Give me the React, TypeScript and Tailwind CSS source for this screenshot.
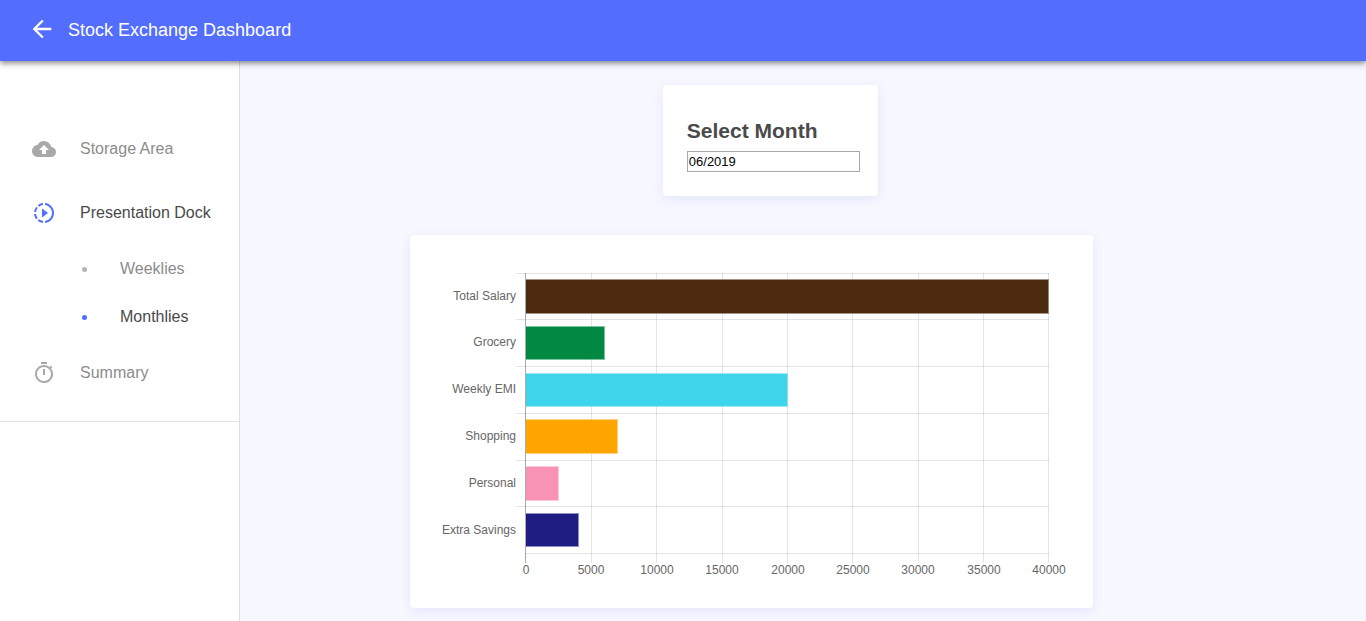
import { MdArrowBack, MdBackup, MdSlowMotionVideo, MdOutlineTimer } from "react-icons/md";

const ROWS = [
  { label: "Total Salary", value: 40000, fill: "#4b2a10", top: 279, height: 35, base: 300 },
  { label: "Grocery", value: 6000, fill: "#018843", top: 326, height: 34, base: 346 },
  { label: "Weekly EMI", value: 20000, fill: "#3ed4e9", top: 373, height: 34, base: 393 },
  { label: "Shopping", value: 7000, fill: "#ffa500", top: 419, height: 35, base: 440 },
  { label: "Personal", value: 2500, fill: "#f893b5", top: 466, height: 35, base: 487 },
  { label: "Extra Savings", value: 4000, fill: "#1f1d82", top: 513, height: 34, base: 534 },
];
const TICKS = [0, 5000, 10000, 15000, 20000, 25000, 30000, 35000, 40000];
const LINES = [273, 319, 366, 413, 460, 506];
const AXIS = 525;
const PLOT = 523;
const xOf = (value: number) => Math.ceil(AXIS + (value / 40000) * PLOT);
const labelX = (value: number) => Math.round(AXIS + (value / 40000) * PLOT) + 1;

function BarChart() {
  return (
    <svg viewBox="434 259 635 325" className="block w-full" role="img" aria-label="Monthly amounts">
      <g fill="#000000" fillOpacity="0.1" shapeRendering="crispEdges">
        {LINES.map((y) => (
          <rect key={y} x="516" y={y} width="533" height="1" />
        ))}
        <rect x={AXIS} y="553" width="524" height="1" />
        {TICKS.map((t) => (
          <rect key={t} x={xOf(t)} y="273" width="1" height="290" />
        ))}
        <rect x={AXIS} y="273" width="1" height="290" fillOpacity="0.25" />
      </g>
      {ROWS.map((r) => (
        <g key={r.label}>
          <rect x="526" y={r.top} width={xOf(r.value) - 525} height={r.height} fill={r.fill} fillOpacity="0.5" />
          <rect x="526" y={r.top + 1} width={xOf(r.value) - 526} height={r.height - 2} fill={r.fill} />
        </g>
      ))}
      <g fill="#666666" fontSize="12" fontFamily='"Liberation Sans", Arial, sans-serif'>
        {ROWS.map((r) => (
          <text key={r.label} x="516" y={r.base} textAnchor="end">
            {r.label}
          </text>
        ))}
        {TICKS.map((t) => (
          <text key={t} x={labelX(t)} y="574" textAnchor="middle">
            {t}
          </text>
        ))}
      </g>
    </svg>
  );
}

export default function App() {
  return (
    <div className="flex min-h-screen flex-col bg-[#f6f7ff] font-['Liberation_Sans',Arial,sans-serif]">
      <header className="relative flex h-[61px] items-center bg-[#536dfe] px-7 pb-[2px] text-white shadow-[0_2px_6px_rgba(0,0,0,0.5)]">
        <button type="button" aria-label="Back" className="mr-3 pb-[2px]">
          <MdArrowBack className="size-7" />
        </button>
        <h1 className="text-lg">Stock Exchange Dashboard</h1>
      </header>
      <div className="flex flex-1">
        <nav className="w-60 shrink-0 border-r border-[#dfdfe3] bg-white pt-14 text-base text-[#8c8c8c]">
          <div className="border-b border-[#e2e2e2] pb-4">
            <a href="#storage" className="flex h-16 items-center gap-6 pl-8">
              <MdBackup className="size-6 text-[#a9a9a9]" />
              Storage Area
            </a>
            <a href="#presentation" className="flex h-16 items-center gap-6 pl-8 text-[#4a4a4a]">
              <MdSlowMotionVideo className="size-6 text-[#536dfe]" />
              Presentation Dock
            </a>
            <a href="#weeklies" className="flex h-12 items-center gap-8 pl-[82px]">
              <span className="mr-px size-[5px] rounded-full bg-[#b4b4b4]" />
              Weeklies
            </a>
            <a href="#monthlies" className="flex h-12 items-center gap-8 pl-[82px] text-[#4a4a4a]">
              <span className="mr-px size-[5px] rounded-full bg-[#536dfe]" />
              Monthlies
            </a>
            <a href="#summary" className="flex h-16 items-center gap-6 pl-8">
              <MdOutlineTimer className="size-6 text-[#a9a9a9]" />
              Summary
            </a>
          </div>
        </nav>
        <main className="flex-1 pt-6">
          <section className="ml-[37.55%] w-[215px] rounded bg-white px-6 pt-8 pb-6 shadow-[0_3px_11px_rgba(83,90,220,0.1)]">
            <label htmlFor="month" className="block pb-[6px] text-[21px] leading-[28px] font-bold text-[#4a4a4a]">
              Select Month
            </label>
            <input
              id="month"
              type="text"
              defaultValue="06/2019"
              className="block h-[21px] w-[173px] border border-[#a9a9a9] px-px pb-px text-[13px] text-black"
            />
          </section>
          <section className="mt-[39px] mb-[13px] ml-[15.1%] w-[50vw] rounded bg-white p-6 shadow-[0_3px_11px_rgba(83,90,220,0.1)]">
            <BarChart />
          </section>
        </main>
      </div>
    </div>
  );
}
